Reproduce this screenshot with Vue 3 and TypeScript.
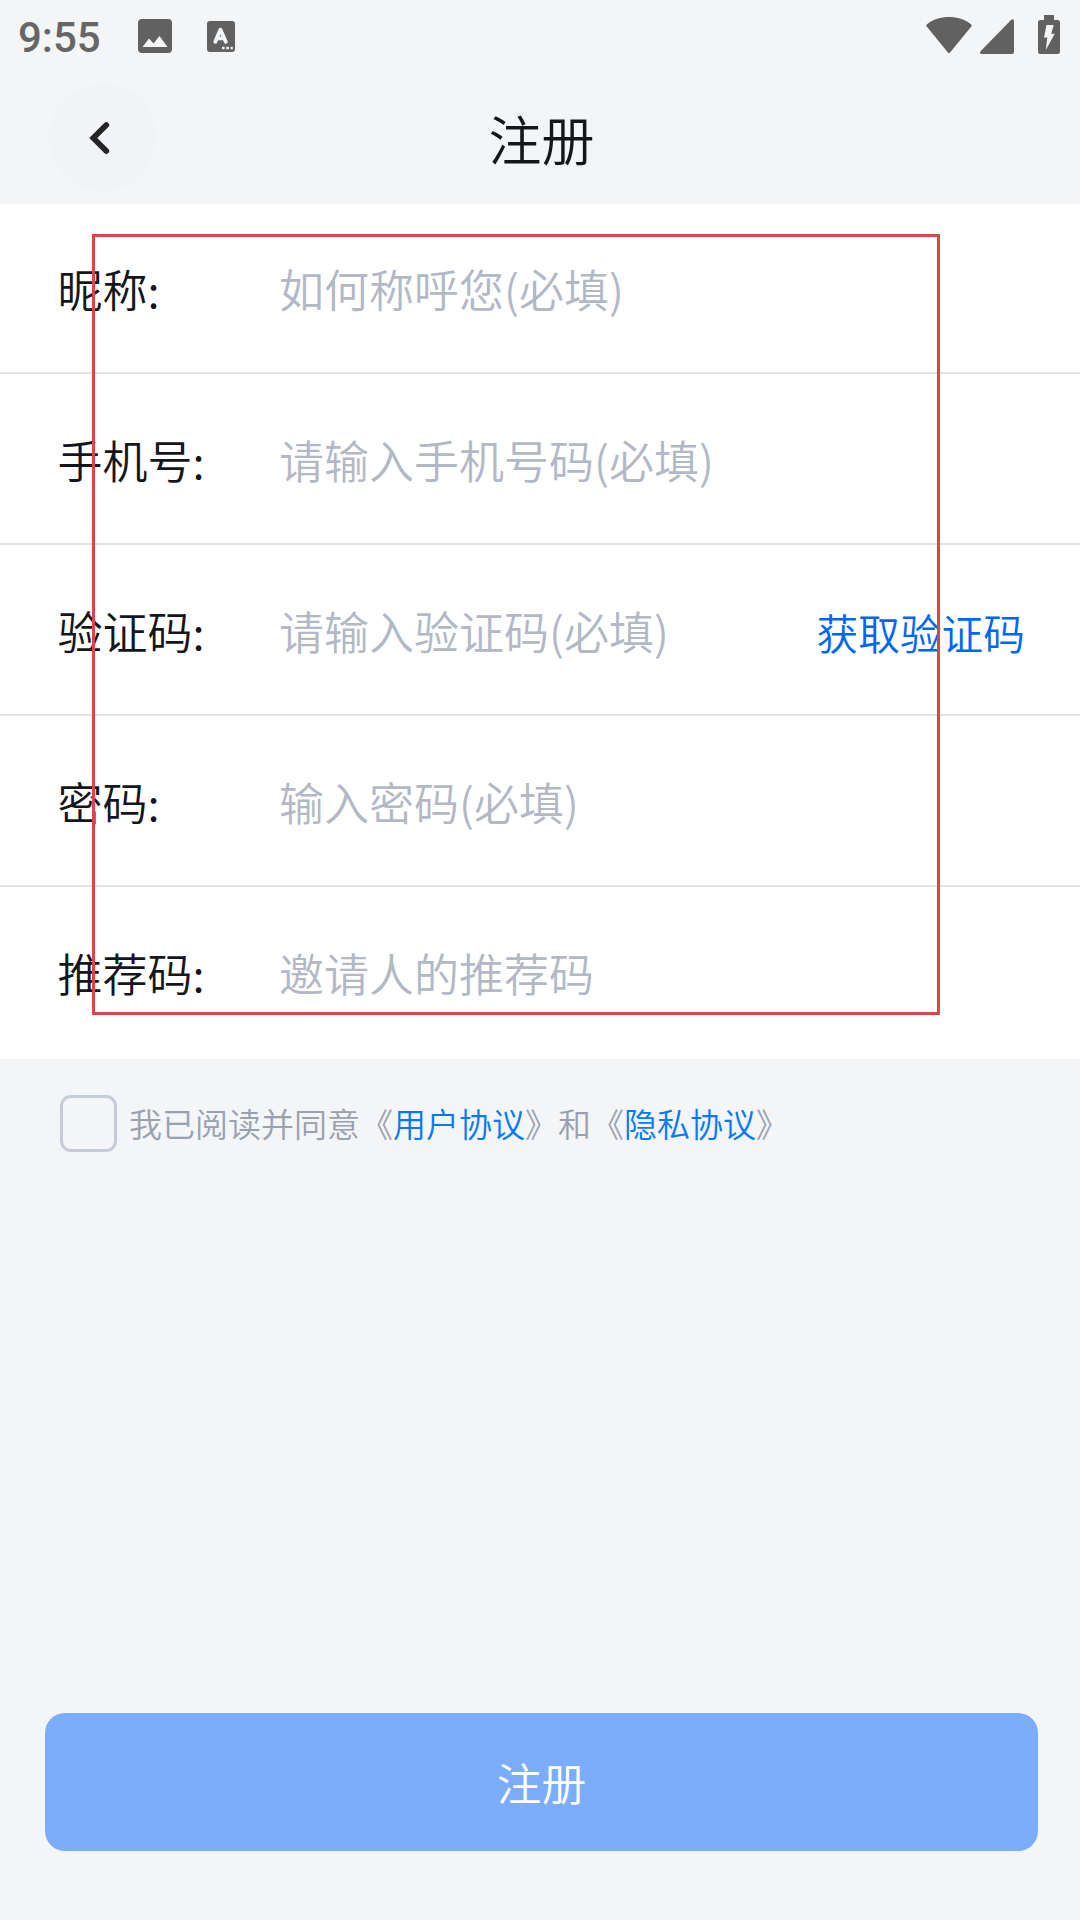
<script setup lang="ts">
interface Field {
  label: string
  placeholder: string
  action?: string
}

const fields: Field[] = [
  { label: '昵称:', placeholder: '如何称呼您(必填)' },
  { label: '手机号:', placeholder: '请输入手机号码(必填)' },
  { label: '验证码:', placeholder: '请输入验证码(必填)', action: '获取验证码' },
  { label: '密码:', placeholder: '输入密码(必填)' },
  { label: '推荐码:', placeholder: '邀请人的推荐码' },
]
</script>

<template>
  <div class="page">
    <div class="status">
      <span class="time">9:55</span>
      <svg class="photo" width="34" height="34" viewBox="0 0 34 34">
        <rect width="34" height="34" rx="4" fill="#616161" />
        <path d="M4.5 28 L11 19.5 L15.5 24.5 L21.5 17 L29.5 28 Z" fill="#f3f5f7" />
      </svg>
      <svg class="ime" width="28" height="31" viewBox="0 0 28 31">
        <rect width="28" height="31" rx="3" fill="#616161" />
        <path d="M8.3 20.8 L13.4 8.6 L18.8 20.8 M10.3 17.3 H17" fill="none" stroke="#f3f5f7" stroke-width="3.8" stroke-linecap="round" stroke-linejoin="round" />
        <path d="M15 25.7h2.6v2.6H15z M19.3 25.7h2.6v2.6h-2.6z M23.6 25.7h2.2v2.6h-2.2z" fill="#f3f5f7" />
      </svg>
      <span class="spacer"></span>
      <svg class="wifi" width="46" height="37" viewBox="0 0 46 37">
        <path d="M1 7.2 C13 -2.4 33 -2.4 45 7.2 Q46.200 8.300 45.300 9.500 L24.300 35.300 Q23 37 21.700 35.300 L0.700 9.500 Q-0.200 8.300 1 7.200 Z" fill="#616161" />
      </svg>
      <svg class="signal" width="34" height="35" viewBox="0 0 34 35">
        <path d="M30.800 1.300 Q34 -1.200 34 2.500 V33 Q34 35 32 35 H2 Q-1.500 35 0.800 32 Z" fill="#616161" />
      </svg>
      <svg class="battery" width="22" height="39" viewBox="0 0 22 39">
        <path d="M6 0 H16 V5 H19.500 Q22 5 22 7.500 V36.500 Q22 39 19.500 39 H2.500 Q0 39 0 36.500 V7.500 Q0 5 2.500 5 H6 Z" fill="#616161" />
        <path d="M8.500 10 H15.800 L13.200 18.800 H16.800 L7.800 35 L9.300 22.500 H6 Z" fill="#f3f5f7" />
      </svg>
    </div>

    <header class="header">
      <button class="back" aria-label="返回">
        <svg width="24" height="36" viewBox="0 0 24 36">
          <path d="M18.300 5 L5.300 18 L18.300 31" fill="none" stroke="#242424" stroke-width="5.700" stroke-linecap="round" stroke-linejoin="miter" />
        </svg>
      </button>
      <h1 class="title">注册</h1>
    </header>

    <main class="form">
      <div v-for="field in fields" :key="field.label" class="row">
        <span class="label">{{ field.label }}</span>
        <span class="placeholder">{{ field.placeholder }}</span>
        <span v-if="field.action" class="action">{{ field.action }}</span>
      </div>
    </main>

    <div class="agree">
      <span class="box"></span>
      <span class="terms">我已阅读并同意《<a>用户协议</a>》和《<a>隐私协议</a>》</span>
    </div>

    <button class="submit">注册</button>
    <div class="outline"></div>
  </div>
</template>

<style>
body {
  background: #f3f5f7;
}
</style>

<style scoped>
.page {
  position: relative;
  display: flex;
  flex-direction: column;
  box-sizing: border-box;
  width: 1080px;
  height: 1920px;
  overflow: hidden;
  background: #f3f5f7;
  font-family: "Noto Sans CJK SC", sans-serif;
  font-weight: 350;
}
.status {
  display: flex;
  align-items: flex-start;
  height: 72px;
  flex: none;
}
.time {
  width: 119px;
  padding-left: 18px;
  margin-top: 13px;
  font: 500 42px/49px Roboto, sans-serif;
  color: #666;
}
.photo {
  margin: 19px 0 0 1px;
}
.ime {
  margin: 21px 0 0 35px;
}
.spacer {
  flex: 1;
}
.wifi {
  margin-top: 17px;
}
.signal {
  margin: 19px 0 0 8px;
}
.battery {
  margin: 15px 20px 0 24px;
}
.header {
  display: grid;
  grid-template-columns: 156px 1fr 156px;
  align-items: start;
  height: 132px;
  flex: none;
}
.back {
  display: flex;
  align-items: center;
  justify-content: center;
  width: 107px;
  height: 107px;
  margin: 12px 0 0 49px;
  padding: 0 6px 0 0;
  border: 0;
  border-radius: 50%;
  background: #f1f3f7;
}
.title {
  margin: 27px 0 0 3px;
  text-align: center;
  font-size: 53px;
  line-height: 78px;
  font-weight: 350;
  color: #15161c;
}
.form {
  flex: none;
  height: 855px;
  background: #fff;
}
.row {
  display: flex;
  box-sizing: border-box;
  height: 171px;
  padding: 53px 55px 0 57.5px;
  border-bottom: 2px solid #e3e4e6;
  font-size: 45px;
  line-height: 66px;
  white-space: nowrap;
}
.row:first-child {
  height: 170px;
  padding-top: 52px;
}
.row:last-child {
  border-bottom: 0;
}
.label {
  width: 221.5px;
  color: #15161c;
}
.placeholder {
  flex: 1;
  color: #b3b8c5;
}
.action {
  padding-top: 1px;
  font-size: 41.7px;
  color: #0066f5;
}
.agree {
  display: flex;
  align-items: center;
  flex: none;
  height: 58px;
  margin: 35px 0 0 60px;
}
.box {
  box-sizing: border-box;
  width: 57px;
  height: 57px;
  border: 3px solid #c5ccd7;
  border-radius: 11px;
}
.terms {
  margin-left: 12px;
  font-size: 33px;
  line-height: 48px;
  color: #9aa1ae;
  white-space: nowrap;
}
.terms a {
  color: #0479fa;
}
.submit {
  height: 138px;
  margin: auto 42px 69px 45px;
  padding: 0;
  border: 0;
  border-radius: 20px;
  background: #7cacfc;
  color: #fff;
  font: 350 44.8px/66px "Noto Sans CJK SC", sans-serif;
}
.outline {
  position: absolute;
  left: 92px;
  top: 234px;
  width: 848px;
  height: 781px;
  box-sizing: border-box;
  border: 3px solid #d84745;
}
</style>
